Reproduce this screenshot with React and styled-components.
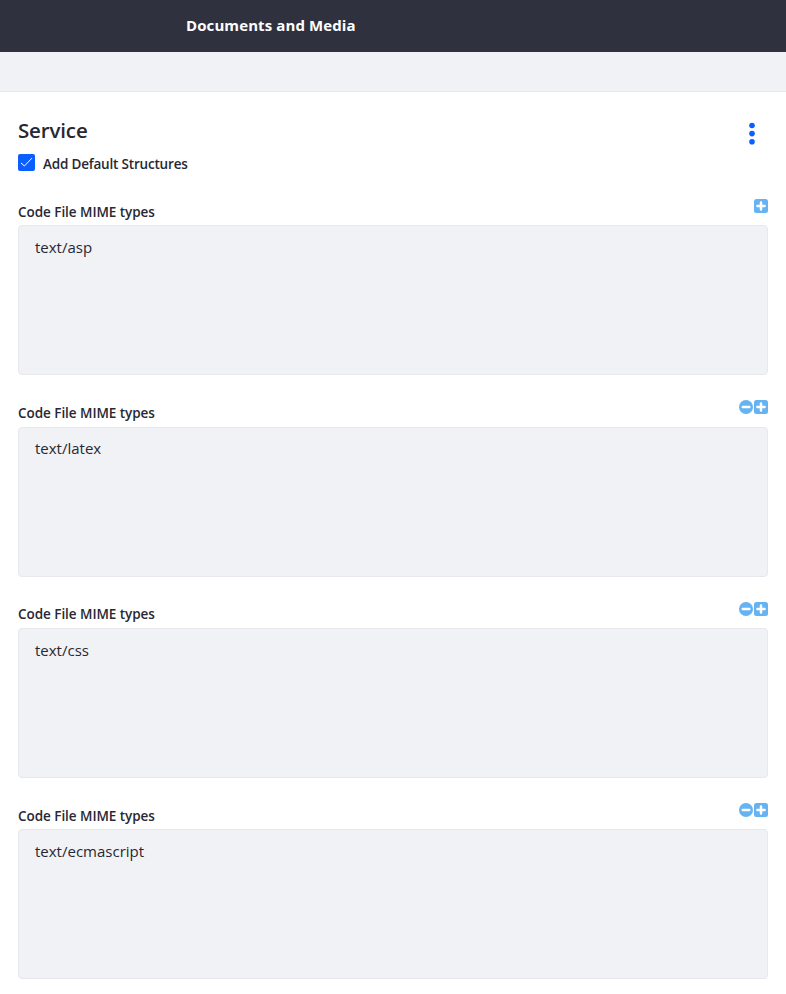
import React from 'react';
import styled, { createGlobalStyle } from 'styled-components';

const GlobalStyle = createGlobalStyle`
  * { box-sizing: border-box; }
  body {
    margin: 0;
    background: #fff;
    color: #272833;
    font-family: "Segoe UI", "Open Sans", "Noto Sans", sans-serif;
  }
`;

const Page = styled.div`
  height: 994px;
  overflow: hidden;
`;

const TopBar = styled.header`
  height: 52px;
  padding: 0 0 3px 186px;
  display: flex;
  align-items: center;
  background: #30313f;
`;

const AppTitle = styled.h1`
  margin: 0;
  color: #fff;
  font-size: 15px;
  font-weight: 700;
  line-height: 24px;
  letter-spacing: 0.1px;
  white-space: nowrap;
`;

const SubBar = styled.div`
  height: 40px;
  background: #f1f2f5;
  border-bottom: 1px solid #e7e7ed;
`;

const Content = styled.main`
  padding: 23px 18px 0;
`;

const SectionHeader = styled.div`
  height: 36px;
  display: flex;
  justify-content: space-between;
`;

const SectionTitle = styled.h2`
  margin: 0;
  font-size: 20.5px;
  font-weight: 600;
  line-height: 31px;
  letter-spacing: -0.15px;
  white-space: nowrap;
`;

const MenuButton = styled.button`
  width: 32px;
  height: 36px;
  padding: 1px 0 0;
  display: flex;
  align-items: center;
  justify-content: center;
  border: 0;
  background: none;
`;

const CheckRow = styled.label`
  height: 46.3px;
  display: flex;
  gap: 8px;
`;

const CheckMark = styled.span`
  width: 17px;
  height: 17px;
  margin-top: 3px;
  display: flex;
  border-radius: 2px;
  background: #0b5fff;
`;

const LabelText = styled.span`
  font-size: 13.5px;
  font-weight: 600;
  line-height: 20px;
  letter-spacing: ${(p) => p.$spacing};
  white-space: nowrap;
`;

const CheckText = styled(LabelText)`
  margin-top: 3px;
`;

const Field = styled.section`
  height: 201.33px;
`;

const FieldHeader = styled.div`
  height: 28px;
  display: flex;
  justify-content: space-between;
`;

const FieldLabel = styled(LabelText)`
  margin-top: 4.4px;
`;

const Actions = styled.div`
  height: 17.5px;
  display: flex;
  align-items: center;
  gap: 1px;
`;

const TextBox = styled.div`
  height: 150px;
  padding: 8.75px 16px;
  border: 1px solid #e7e7ed;
  border-radius: 4px;
  background: #f1f2f5;
  font-size: 15px;
  line-height: 24px;
`;

const DotsIcon = () => (
  <svg width="8" height="24" viewBox="0 0 8 24" fill="#0b5fff">
    <circle cx="4" cy="3.5" r="2.8" />
    <circle cx="4" cy="11.6" r="2.8" />
    <circle cx="4" cy="19.7" r="2.8" />
  </svg>
);

const CheckIcon = () => (
  <svg width="17" height="17" viewBox="0 0 17 17" fill="none" stroke="#fff" strokeWidth="1">
    <path d="M3.3 9.2 6.4 12 13.7 4.4" strokeLinecap="round" strokeLinejoin="round" />
  </svg>
);

const PlusIcon = () => (
  <svg width="14" height="14" viewBox="0 0 14 14">
    <rect width="14" height="14" rx="2.5" fill="#65b3f2" />
    <path d="M3.4 7h7.2M7 3.4v7.2" stroke="#fff" strokeWidth="2.5" strokeLinecap="round" />
  </svg>
);

const MinusIcon = () => (
  <svg width="14" height="14" viewBox="0 0 14 14">
    <circle cx="7" cy="7" r="7" fill="#65b3f2" />
    <path d="M3.7 7h6.6" stroke="#fff" strokeWidth="2.4" strokeLinecap="round" />
  </svg>
);

const mimeTypes = [
  { value: 'text/asp', removable: false },
  { value: 'text/latex', removable: true },
  { value: 'text/css', removable: true },
  { value: 'text/ecmascript', removable: true },
];

export default function App() {
  return (
    <Page>
      <GlobalStyle />
      <TopBar>
        <AppTitle>Documents and Media</AppTitle>
      </TopBar>
      <SubBar />
      <Content>
        <SectionHeader>
          <SectionTitle>Service</SectionTitle>
          <MenuButton aria-label="Options"><DotsIcon /></MenuButton>
        </SectionHeader>
        <CheckRow>
          <CheckMark><CheckIcon /></CheckMark>
          <CheckText $spacing="-0.19px">Add Default Structures</CheckText>
        </CheckRow>
        {mimeTypes.map(({ value, removable }) => (
          <Field key={value}>
            <FieldHeader>
              <FieldLabel $spacing="-0.05px">Code File MIME types</FieldLabel>
              <Actions>
                {removable && <MinusIcon />}
                <PlusIcon />
              </Actions>
            </FieldHeader>
            <TextBox>{value}</TextBox>
          </Field>
        ))}
      </Content>
    </Page>
  );
}
